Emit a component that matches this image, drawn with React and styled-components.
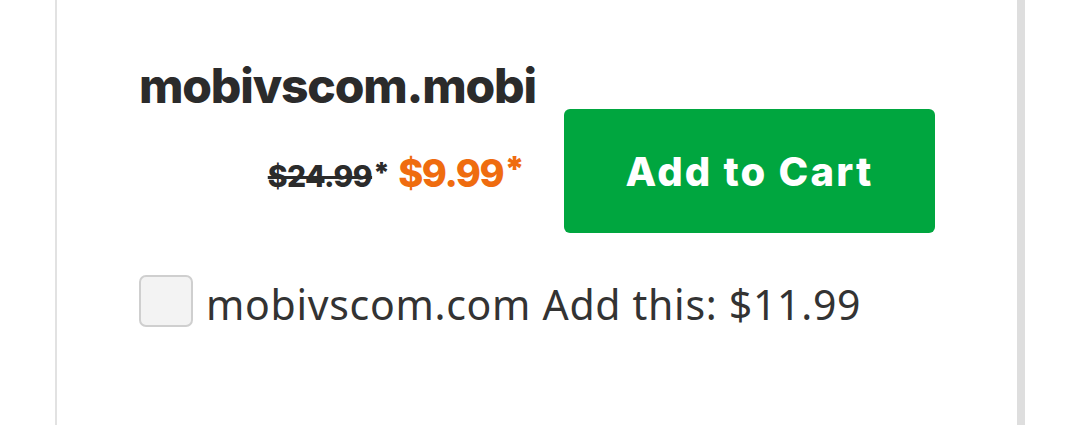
import React from "react";
import styled, { createGlobalStyle } from "styled-components";

const GlobalStyle = createGlobalStyle`
  html, body { margin: 0; padding: 0; background: #fff; }
  body { font-family: "Noto Sans", sans-serif; }
`;

const Page = styled.div`
  padding-left: 55px;
  width: 1070px;
  box-sizing: border-box;
`;

const Card = styled.section`
  box-sizing: border-box;
  width: 970px;
  height: 425px;
  border-left: 2px solid #e2e2e2;
  border-right: 8px solid #dedede;
  padding: 57px 0 0 82px;
  overflow: hidden;
`;

const TopRow = styled.div`
  display: flex;
  align-items: flex-start;
`;

const Info = styled.div`
  width: 396px;
  display: flex;
  flex-direction: column;
`;

const Title = styled.h2`
  margin: 0;
  font-family: Inter, sans-serif;
  font-weight: 800;
  font-size: 48px;
  line-height: 1.2;
  color: #2b2b2b;
  letter-spacing: -1.2px;
  white-space: nowrap;
`;

const PriceRow = styled.div`
  display: flex;
  justify-content: flex-end;
  align-items: baseline;
  gap: 8px;
  padding-right: 10px;
  margin-top: 39px;
  font-family: Inter, sans-serif;
  font-weight: 800;
  line-height: 1;
  white-space: nowrap;
`;

const OldPrice = styled.span`
  font-size: 30px;
  color: #2b2b2b;
  letter-spacing: -0.6px;
  text-decoration: line-through;
  text-decoration-thickness: 2.5px;
`;

const NewPrice = styled.span`
  font-size: 38px;
  color: #ef6c0f;
  letter-spacing: -1.4px;
`;

const Star = styled.span`
  display: inline-block;
  font-size: ${(p) => p.$size}px;
  font-weight: 900;
  letter-spacing: 0;
  margin-left: 1px;
  transform: translateY(${(p) => p.$lift}px);
`;

const CartButton = styled.button`
  margin: 52px 0 0 29px;
  width: 371px;
  height: 124px;
  border: none;
  border-radius: 6px;
  background: #00a63f;
  color: #fff;
  font-family: Inter, sans-serif;
  font-weight: 800;
  font-size: 40px;
  letter-spacing: 2.2px;
  padding: 0;
  cursor: pointer;
`;

const AddonRow = styled.label`
  display: flex;
  align-items: center;
  gap: 13px;
  margin-top: 40px;
  color: #333;
  font-family: "Noto Sans", sans-serif;
  font-size: 41px;
  letter-spacing: 0.7px;
`;

const Box = styled.input`
  appearance: none;
  margin: 0;
  width: 54px;
  height: 52px;
  box-sizing: border-box;
  border: 2px solid #cfcfcf;
  border-radius: 7px;
  background: #f3f3f3;
`;

const AddonText = styled.span`
  position: relative;
  top: 3px;
`;

export default function App() {
  return (
    <>
      <GlobalStyle />
      <Page>
        <Card>
          <TopRow>
            <Info>
              <Title>mobivscom.mobi</Title>
              <PriceRow>
                <OldPrice>$24.99<Star $size={28} $lift={-4}>*</Star></OldPrice>
                <NewPrice>$9.99<Star $size={34} $lift={-6}>*</Star></NewPrice>
              </PriceRow>
            </Info>
            <CartButton type="button">Add to Cart</CartButton>
          </TopRow>
          <AddonRow>
            <Box type="checkbox" />
            <AddonText>mobivscom.com Add this: $11.99</AddonText>
          </AddonRow>
        </Card>
      </Page>
    </>
  );
}
